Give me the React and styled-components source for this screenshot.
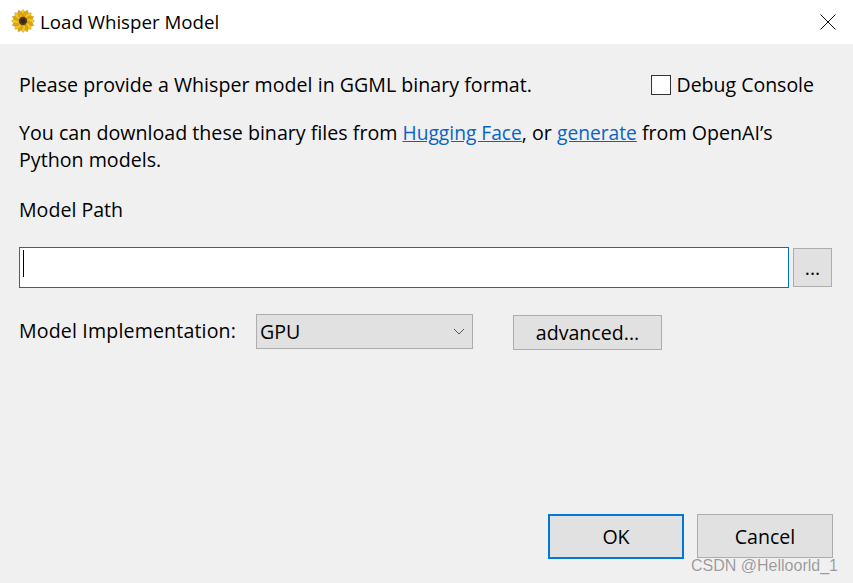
import styled, { createGlobalStyle } from "styled-components";

const GlobalStyle = createGlobalStyle`
  html, body {
    margin: 0;
    padding: 0;
    background: #f0f0f0;
  }
  * {
    box-sizing: border-box;
  }
`;

const petals = Array.from({ length: 16 }, (_, i) => i * 22.5);

function SunflowerIcon() {
  return (
    <svg width="24" height="24" viewBox="0 0 24 24">
      {petals.map((angle, i) => (
        <path
          key={angle}
          d="M12 0.4 C15 3.5 15 7 12 10 C9 7 9 3.5 12 0.4 Z"
          fill={i % 2 ? "#e3a50e" : "#f6cb14"}
          stroke="#a98a2c"
          strokeWidth="0.4"
          transform={`rotate(${angle} 12 12)`}
        />
      ))}
      <circle cx="12" cy="12" r="4.2" fill="#5a3a1c" />
      <circle cx="12" cy="12" r="2.4" fill="#3a2619" />
    </svg>
  );
}

function CloseIcon() {
  return (
    <svg width="16" height="16" viewBox="0 0 16 16">
      <path d="M0.5 0.5 L15.5 15.5 M15.5 0.5 L0.5 15.5" stroke="#111" strokeWidth="1" fill="none" />
    </svg>
  );
}

function ChevronIcon() {
  return (
    <svg width="12" height="7" viewBox="0 0 12 7">
      <path d="M1 1 L6 6 L11 1" stroke="#555" strokeWidth="1" fill="none" />
    </svg>
  );
}

export default function App() {
  return (
    <>
      <GlobalStyle />
      <Window>
        <TitleBar>
          <TitleGroup>
            <SunflowerIcon />
            <Title>Load Whisper Model</Title>
          </TitleGroup>
          <CloseButton>
            <CloseIcon />
          </CloseButton>
        </TitleBar>
        <Body>
          <IntroRow>
            <Text>Please provide a Whisper model in GGML binary format.</Text>
            <CheckLabel>
              <CheckBox />
              <CheckText>Debug Console</CheckText>
            </CheckLabel>
          </IntroRow>
          <Paragraph>
            You can download these binary files from <Link>Hugging Face</Link>, or{" "}
            <Link>generate</Link> from OpenAI’s
            <br />
            Python models.
          </Paragraph>
          <PathLabel>Model Path</PathLabel>
          <PathRow>
            <PathInput>
              <Caret />
            </PathInput>
            <BrowseButton>...</BrowseButton>
          </PathRow>
          <ImplRow>
            <ImplLabel>Model Implementation:</ImplLabel>
            <Select>
              <span>GPU</span>
              <ChevronIcon />
            </Select>
            <AdvancedButton>advanced...</AdvancedButton>
          </ImplRow>
          <Footer>
            <FooterButton $primary>OK</FooterButton>
            <FooterButton>Cancel</FooterButton>
          </Footer>
        </Body>
        <Watermark>CSDN @Helloorld_1</Watermark>
      </Window>
    </>
  );
}

const fontStack = `"Open Sans", "Noto Sans", sans-serif`;

const Window = styled.div`
  position: relative;
  width: 853px;
  height: 583px;
  display: flex;
  flex-direction: column;
  overflow: hidden;
  background: #f0f0f0;
  color: #000;
  font-family: ${fontStack};
  font-size: 19.6px;
`;

const TitleBar = styled.div`
  height: 44px;
  flex: none;
  display: flex;
  align-items: center;
  justify-content: space-between;
  padding: 0 17px 2px 11px;
  background: #fff;
`;

const TitleGroup = styled.div`
  display: flex;
  align-items: center;
  gap: 5px;
`;

const Title = styled.div`
  font-size: 18.7px;
`;

const CloseButton = styled.div`
  display: flex;
  align-items: center;
  height: 16px;
  margin-top: 2px;
`;

const Body = styled.div`
  flex: 1;
  display: flex;
  flex-direction: column;
  padding: 0 20px 24px 19px;
`;

const IntroRow = styled.div`
  display: flex;
  align-items: center;
  justify-content: space-between;
  margin-top: 28px;
  height: 26px;
  padding-right: 19px;
`;

const Text = styled.span`
  line-height: 26px;
  white-space: nowrap;
  letter-spacing: 0.02px;
`;

const CheckLabel = styled.label`
  display: flex;
  align-items: center;
  gap: 5px;
`;

const CheckText = styled.span`
  font-size: 19.5px;
  line-height: 26px;
  white-space: nowrap;
`;

const CheckBox = styled.span`
  width: 20px;
  height: 20px;
  background: #fff;
  border: 1px solid #333;
`;

const Paragraph = styled.div`
  margin-top: 21px;
  line-height: 27px;
  white-space: nowrap;
  font-size: 19.65px;
`;

const Link = styled.a`
  color: #0a63c7;
  font-size: 19.2px;
  text-decoration: underline;
`;

const PathLabel = styled.div`
  margin-top: 24px;
  line-height: 26px;
`;

const PathRow = styled.div`
  display: flex;
  align-items: center;
  gap: 4px;
  margin-top: 24px;
`;

const PathInput = styled.div`
  width: 770px;
  height: 41px;
  padding: 2px 3px;
  background: #fff;
  border: 1px solid #0072c6;
`;

const Caret = styled.div`
  width: 1px;
  height: 27px;
  background: #000;
`;

const flatButton = `
  display: flex;
  align-items: center;
  justify-content: center;
  background: #e1e1e1;
  border: 1px solid #adadad;
  font-family: ${fontStack};
  color: #000;
`;

const BrowseButton = styled.div`
  ${flatButton}
  width: 39px;
  height: 39px;
`;

const ImplRow = styled.div`
  display: flex;
  align-items: flex-start;
  margin-top: 26px;
`;

const ImplLabel = styled.div`
  width: 237px;
  line-height: 34px;
  white-space: nowrap;
  letter-spacing: 0.15px;
`;

const Select = styled.div`
  width: 217px;
  height: 35px;
  display: flex;
  align-items: center;
  justify-content: space-between;
  padding: 0 7px 0 3px;
  background: #e1e1e1;
  border: 1px solid #adadad;
`;

const AdvancedButton = styled.div`
  ${flatButton}
  width: 149px;
  height: 35px;
  margin-left: 40px;
  margin-top: 1px;
`;

const Footer = styled.div`
  display: flex;
  justify-content: flex-end;
  align-items: flex-start;
  gap: 13px;
  margin-top: auto;
`;

const FooterButton = styled.div`
  ${flatButton}
  width: 136px;
  height: ${(p) => (p.$primary ? "45px" : "44px")};
  border: ${(p) => (p.$primary ? "2px solid #0078d7" : "1px solid #adadad")};
`;

const Watermark = styled.div`
  position: absolute;
  right: 15px;
  bottom: 8px;
  font-family: "Liberation Sans", Arial, sans-serif;
  font-size: 16px;
  color: rgba(120, 120, 120, 0.75);
  text-shadow: 0 0 1px #fff;
`;
